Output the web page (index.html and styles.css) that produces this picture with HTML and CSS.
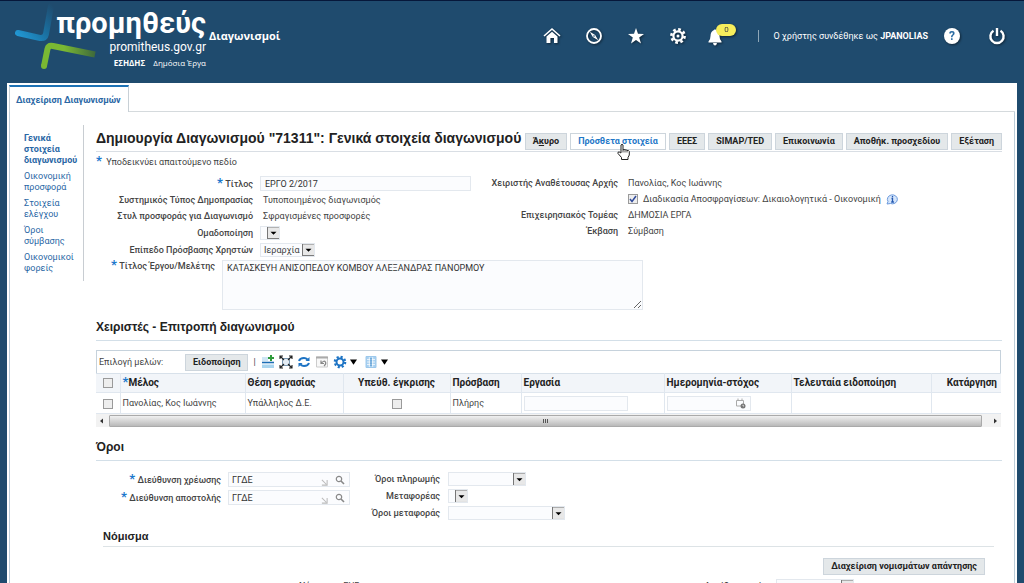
FILE: index.html
```
<!DOCTYPE html>
<html lang="el">
<head>
    <meta charset="UTF-8">
    <meta name="viewport" content="width=device-width, initial-scale=1.0">
    <title>Διαγωνισμοί</title>
    <link rel="stylesheet" href="styles.css">
</head>
<body>
    <header class="topbar">
        <div class="logo">
            <svg class="logo-mark" width="84" height="70" viewBox="0 0 84 70" aria-hidden="true">
                <defs>
                    <linearGradient id="blueArm" gradientUnits="userSpaceOnUse" x1="18" y1="34" x2="52" y2="4">
                        <stop offset="0" stop-color="#2196d2"/>
                        <stop offset="0.5" stop-color="#1a6f9f"/>
                        <stop offset="1" stop-color="#1f4b6e"/>
                    </linearGradient>
                    <linearGradient id="greenArm" x1="0" y1="0" x2="1" y2="0">
                        <stop offset="0.4" stop-color="#7ab833"/>
                        <stop offset="1" stop-color="#3f6a3c"/>
                    </linearGradient>
                </defs>
                <path d="M18 32 L40 37 Q45 37.500 46 33 L51 5" fill="none" stroke="url(#blueArm)" stroke-width="6" stroke-linecap="round"/>
                <path d="M44 65 L47.500 48 Q48.500 44 53 45 L95 53.500" fill="none" stroke="url(#greenArm)" stroke-width="6"/>
                <circle cx="44" cy="65" r="3" fill="#7ab833"/>
            </svg>
            <div class="logo-text">
                <span class="logo-name">προμηθεύς</span>
                <span class="logo-url">promitheus.gov.gr</span>
                <span class="logo-sub"><b>ΕΣΗΔΗΣ</b> Δημόσια Έργα</span>
            </div>
        </div>
        <span class="app-name">Διαγωνισμοί</span>
        <nav class="tools">
            <button class="tool" aria-label="Αρχική">
                <svg width="18" height="18" viewBox="0 0 18 18"><path d="M1 9 L9 2 L17 9" fill="none" stroke="#fff" stroke-width="1.6"/><path d="M3.5 9.6 L9 4.8 L14.5 9.6 V16 H11 V11 H7.4 V16 H3.5 Z" fill="#fff"/></svg>
            </button>
            <button class="tool" aria-label="Πλοήγηση">
                <svg width="18" height="18" viewBox="0 0 18 18"><circle cx="9" cy="9" r="7" fill="none" stroke="#fff" stroke-width="1.8"/><path d="M4.8 4.8 L10.2 8 L13.2 13.2 L7.8 10 Z" fill="#fff"/><circle cx="9" cy="9" r="0.8" fill="#1f4b6e"/></svg>
            </button>
            <button class="tool" aria-label="Αγαπημένα">
                <svg width="18" height="18" viewBox="0 0 18 18"><path d="M9 1 L11 6.8 L17 6.9 L12.2 10.6 L14 16.4 L9 13 L4 16.4 L5.8 10.6 L1 6.9 L7 6.8 Z" fill="#fff"/></svg>
            </button>
            <button class="tool" aria-label="Ρυθμίσεις">
                <svg width="18" height="18" viewBox="0 0 18 18"><circle cx="9" cy="9" r="6.6" fill="none" stroke="#fff" stroke-width="2.6" stroke-dasharray="2.7 2.48"/><circle cx="9" cy="9" r="4.6" fill="none" stroke="#fff" stroke-width="2.2"/><circle cx="9" cy="9" r="1.5" fill="#fff"/></svg>
            </button>
            <button class="tool bell" aria-label="Ειδοποιήσεις">
                <svg width="18" height="20" viewBox="0 0 18 20"><path d="M8 4 Q9 2.6 10 4 Q13.5 5.5 13.5 10 Q13.5 13.5 15.5 15.5 V16.5 H2.5 V15.5 Q4.5 13.5 4.5 10 Q4.5 5.5 8 4 Z" fill="#fff"/><path d="M7 17 H11 Q10.5 19.5 9 19.5 Q7.5 19.5 7 17 Z" fill="#fff"/></svg>
                <span class="badge">0</span>
            </button>
        </nav>
        <span class="divider"></span>
        <span class="user">Ο χρήστης συνδέθηκε ως <b>JPANOLIAS</b></span>
        <button class="tool help" aria-label="Βοήθεια">?</button>
        <button class="tool power" aria-label="Έξοδος">
            <svg width="18" height="18" viewBox="0 0 18 18"><path d="M5.5 3.8 A6.6 6.6 0 1 0 12.5 3.8" fill="none" stroke="#fff" stroke-width="2.4"/><path d="M9 1 V9" stroke="#fff" stroke-width="2.4"/></svg>
        </button>
    </header>

    <main class="panel">
        <div class="tabs"><a class="tab" href="#">Διαχείριση Διαγωνισμών</a></div>
        <div class="content">
            <nav class="sidebar">
                <a class="current" href="#">Γενικά στοιχεία διαγωνισμού</a>
                <a href="#">Οικονομική προσφορά</a>
                <a href="#">Στοιχεία ελέγχου</a>
                <a href="#">Όροι σύμβασης</a>
                <a href="#">Οικονομικοί φορείς</a>
            </nav>

            <div class="page">
                <div class="page-head">
                    <h1>Δημιουργία Διαγωνισμού "71311": Γενικά στοιχεία διαγωνισμού</h1>
                    <div class="actions">
                        <button class="btn">Ά<u>κ</u>υρο</button>
                        <button class="btn hover">Πρόσθετα στοιχεία
                            <svg class="hand" width="14" height="18" viewBox="0 0 14 18" aria-hidden="true"><path d="M4 10 V2 Q5 0.5 6 2 V7 Q7 5.8 8 7 Q9 6.3 10 7.5 Q11.5 6.8 12.3 8.5 V12 L11 14.5 V16.5 H4.5 V14.5 L1 10.5 Q0.5 8.5 2.2 9 Z" fill="#fff" stroke="#222" stroke-width="1"/><path d="M6 7 V9.5 M8 7.5 V9.5 M10 8 V9.5" stroke="#222" stroke-width="0.8"/></svg>
                        </button>
                        <button class="btn">ΕΕΕΣ</button>
                        <button class="btn">SIMAP/TED</button>
                        <button class="btn">Επικοινωνία</button>
                        <button class="btn">Αποθήκ. προσχεδίου</button>
                        <button class="btn">Εξέταση</button>
                    </div>
                </div>
                <p class="hint"><span class="req">*</span> Υποδεικνύει απαιτούμενο πεδίο</p>

                <div class="general">
                    <div class="fields fields-left">
                        <label for="title"><span class="req">*</span> Τίτλος</label>
                        <input class="field title-field" id="title" type="text" value="ΕΡΓΟ 2/2017">
                        <span class="label">Συστημικός Τύπος Δημοπρασίας</span>
                        <span class="value">Τυποποιημένος διαγωνισμός</span>
                        <span class="label">Στυλ προσφοράς για Διαγωνισμό</span>
                        <span class="value">Σφραγισμένες προσφορές</span>
                        <label for="grouping">Ομαδοποίηση</label>
                        <select class="select select-empty" id="grouping"><option></option></select>
                        <label for="access">Επίπεδο Πρόσβασης Χρηστών</label>
                        <select class="select select-access" id="access"><option>Ιεραρχία</option></select>
                    </div>
                    <div class="fields fields-right">
                        <span class="label">Χειριστής Αναθέτουσας Αρχής</span>
                        <span class="value">Πανολίας, Κος Ιωάννης</span>
                        <span class="check-row">
                            <input class="check" id="unseal" type="checkbox" checked>
                            <label for="unseal">Διαδικασία Αποσφραγίσεων: Δικαιολογητικά - Οικονομική</label>
                            <svg width="12" height="11" viewBox="0 0 12 11" aria-hidden="true"><path d="M1 10 L2 7.5 A5 4.5 0 1 1 4.5 9.5 Z" fill="#d5e5fa" stroke="#6c9add" stroke-width="1"/><path d="M6.5 2 V3.3 M5.5 4.5 H6.5 V8 M5.2 8 H7.9" stroke="#2257b0" stroke-width="1.3" fill="none"/></svg>
                        </span>
                        <span class="label">Επιχειρησιακός Τομέας</span>
                        <span class="value">ΔΗΜΟΣΙΑ ΕΡΓΑ</span>
                        <span class="label">Έκβαση</span>
                        <span class="value">Σύμβαση</span>
                    </div>
                </div>
                <div class="work-title">
                    <label for="work"><span class="req">*</span> Τίτλος Έργου/Μελέτης</label>
                    <textarea class="field" id="work">ΚΑΤΑΣΚΕΥΗ ΑΝΙΣΟΠΕΔΟΥ ΚΟΜΒΟΥ ΑΛΕΞΑΝΔΡΑΣ ΠΑΝΟΡΜΟΥ</textarea>
                </div>

                <h2>Χειριστές - Επιτροπή διαγωνισμού</h2>
                <div class="grid-box">
                    <div class="grid-tools">
                        <span class="grid-caption">Επιλογή μελών:</span>
                        <button class="btn">Ειδοποίηση</button>
                        <span class="sep">|</span>
                        <button class="icon" aria-label="Προσθήκη"><svg width="14" height="14" viewBox="0 0 14 14"><path d="M1 2 H7 V6 H1 Z" fill="#cfe6f5"/><path d="M1 7.5 H13" stroke="#1c6db5" stroke-width="1.6"/><path d="M1 9.5 H13 V13 H1 Z" fill="#a9d4ee"/><path d="M10 0 V6 M7 3 H13" stroke="#2e9b3b" stroke-width="2"/></svg></button>
                        <button class="icon" aria-label="Μεγιστοποίηση"><svg width="14" height="14" viewBox="0 0 14 14"><rect x="3.5" y="3.5" width="7" height="7" fill="#e4edf5" stroke="#7a97b0"/><path d="M1 4 V1 H4 M10 1 H13 V4 M13 10 V13 H10 M4 13 H1 V10 M1 1 L5 5 M13 1 L9 5 M13 13 L9 9 M1 13 L5 9" fill="none" stroke="#222" stroke-width="1.1"/></svg></button>
                        <button class="icon" aria-label="Ανανέωση"><svg width="14" height="14" viewBox="0 0 14 14"><path d="M2 6 Q3 3 7 3 Q9 3 10.5 4.5 M12 8 Q11 11 7 11 Q5 11 3.5 9.5" fill="none" stroke="#1c73c4" stroke-width="2"/><path d="M12.5 2 V6 H8.5 Z M1.5 12 V8 H5.5 Z" fill="#1c73c4"/></svg></button>
                        <button class="icon" aria-label="Αναίρεση"><svg width="14" height="14" viewBox="0 0 14 14"><path d="M1.5 2 H12.5 V12 H1.5 Z" fill="#f8f8f8" stroke="#ccc"/><path d="M1 2.5 H13" stroke="#aaa" stroke-width="2"/><path d="M6.5 8 Q9 5 10.5 7 Q11.5 9 9 11 M6 5.5 V8.5 H9" fill="none" stroke="#888" stroke-width="1.2"/></svg></button>
                        <button class="icon menu" aria-label="Ρυθμίσεις πίνακα"><svg width="14" height="14" viewBox="0 0 14 14"><circle cx="7" cy="7" r="5.2" fill="none" stroke="#1c73c4" stroke-width="2.2" stroke-dasharray="2.1 1.98"/><circle cx="7" cy="7" r="3.5" fill="none" stroke="#1c73c4" stroke-width="2"/></svg><svg class="caret" width="7" height="6" viewBox="0 0 8 6"><path d="M0 0 H8 L4 6 Z"/></svg></button>
                        <button class="icon menu" aria-label="Στήλες"><svg width="14" height="14" viewBox="0 0 14 14"><path d="M2 1.5 H12 V12.5 H2 Z" fill="#a8d0f0" stroke="#9cc8ec"/><path d="M5.3 2 V12 M8.7 2 V12 M3 4.5 H11 M3 7 H11 M3 9.5 H11" stroke="#fff" stroke-width="0.7"/><path d="M7 3 V11" stroke="#3b87c8"/></svg><svg class="caret" width="7" height="6" viewBox="0 0 8 6"><path d="M0 0 H8 L4 6 Z"/></svg></button>
                    </div>
                    <table>
                        <colgroup>
                            <col class="c-check"><col class="c-member"><col class="c-job"><col class="c-approve"><col class="c-access"><col class="c-task"><col class="c-date"><col class="c-last"><col class="c-remove">
                        </colgroup>
                        <thead>
                            <tr>
                                <th><input class="check" type="checkbox" aria-label="Επιλογή όλων"></th>
                                <th><span class="req">*</span>Μέλος</th>
                                <th>Θέση εργασίας</th>
                                <th class="center">Υπεύθ. έγκρισης</th>
                                <th>Πρόσβαση</th>
                                <th>Εργασία</th>
                                <th>Ημερομηνία-στόχος</th>
                                <th>Τελευταία ειδοποίηση</th>
                                <th class="last">Κατάργηση</th>
                            </tr>
                        </thead>
                        <tbody>
                            <tr>
                                <td><input class="check" type="checkbox" aria-label="Επιλογή μέλους"></td>
                                <td>Πανολίας, Κος Ιωάννης</td>
                                <td>Υπάλληλος Δ.Ε.</td>
                                <td class="center"><input class="check" type="checkbox" aria-label="Υπεύθυνος έγκρισης"></td>
                                <td>Πλήρης</td>
                                <td><input class="field task-field" type="text" aria-label="Εργασία"></td>
                                <td>
                                    <span class="field combo date-field">
                                        <input type="text" aria-label="Ημερομηνία-στόχος">
                                        <svg width="11" height="11" viewBox="0 0 11 11"><path d="M1.5 2.5 H8.5 V8 H1.5 Z M3 0.5 V3 M7 0.5 V3" fill="none" stroke="#aaa"/><circle cx="8" cy="8" r="2.5" fill="#777"/><path d="M8 6.8 V8 H9" fill="none" stroke="#fff" stroke-width="0.7"/></svg>
                                    </span>
                                </td>
                                <td></td>
                                <td></td>
                            </tr>
                        </tbody>
                    </table>
                    <div class="scrollbar">
                        <svg width="13" height="12" viewBox="0 0 13 12"><path d="M7 3.5 V8.5 L4 6 Z" fill="#333"/></svg>
                        <div class="thumb"><i></i><i></i><i></i></div>
                        <svg width="19" height="12" viewBox="0 0 19 12"><path d="M12 3.5 V8.5 L15 6 Z" fill="#333"/></svg>
                    </div>
                </div>

                <h2>Όροι</h2>
                <div class="terms">
                    <div class="fields terms-left">
                        <label for="bill"><span class="req">*</span> Διεύθυνση χρέωσης</label>
                        <span class="field combo">
                            <input id="bill" type="text" value="ΓΓΔΕ">
                            <svg class="corner" width="7" height="7" viewBox="0 0 8 8"><path d="M1 1 L6 6 M7 1 V7 H1" fill="none" stroke="#bbb" stroke-width="1.2"/></svg>
                            <svg width="10" height="10" viewBox="0 0 10 10"><circle cx="4" cy="4" r="2.7" fill="none" stroke="#888" stroke-width="1.2"/><path d="M6 6 L9 9" stroke="#888" stroke-width="1.6"/></svg>
                        </span>
                        <label for="ship"><span class="req">*</span> Διεύθυνση αποστολής</label>
                        <span class="field combo">
                            <input id="ship" type="text" value="ΓΓΔΕ">
                            <svg class="corner" width="7" height="7" viewBox="0 0 8 8"><path d="M1 1 L6 6 M7 1 V7 H1" fill="none" stroke="#bbb" stroke-width="1.2"/></svg>
                            <svg width="10" height="10" viewBox="0 0 10 10"><circle cx="4" cy="4" r="2.7" fill="none" stroke="#888" stroke-width="1.2"/><path d="M6 6 L9 9" stroke="#888" stroke-width="1.6"/></svg>
                        </span>
                    </div>
                    <div class="fields terms-right">
                        <label for="payment">Όροι πληρωμής</label>
                        <select class="select select-payment" id="payment"><option></option></select>
                        <label for="carrier">Μεταφορέας</label>
                        <select class="select select-empty" id="carrier"><option></option></select>
                        <label for="freight">Όροι μεταφοράς</label>
                        <select class="select select-freight" id="freight"><option></option></select>
                    </div>
                </div>

                <section class="currency">
                    <h3>Νόμισμα</h3>
                    <div class="currency-actions"><button class="btn">Διαχείριση νομισμάτων απάντησης</button></div>
                    <div class="currency-row">
                        <span class="label">Νόμισμα</span>
                        <span class="value">EUR</span>
                        <label for="precision">Ακρίβεια τιμής</label>
                        <select class="select select-payment" id="precision"><option></option></select>
                    </div>
                </section>
            </div>
        </div>
    </main>
</body>
</html>
```
FILE: styles.css
```
* {
    box-sizing: border-box;
}

body {
    margin: 0;
    height: 100vh;
    overflow: hidden;
    display: flex;
    flex-direction: column;
    background-color: #1f4b6e;
    color: #444;
    font-family: Roboto, "Liberation Sans", sans-serif;
    font-size: 9px;
    line-height: 12px;
}

button, input, select, textarea {
    font: inherit;
    color: inherit;
    margin: 0;
}

a {
    color: #2a67a5;
    text-decoration: none;
}

/* Header */
.topbar {
    flex: none;
    display: flex;
    align-items: center;
    height: 83px;
    padding: 0 18px 12px 0;
    border-top: 1px solid #06173a;
    color: #fff;
}

.logo {
    display: flex;
    align-self: flex-start;
    width: 209px;
}

.logo-mark {
    flex: none;
    overflow: visible;
    margin-right: -29px;
}

.logo-text {
    display: flex;
    flex: 1;
    flex-direction: column;
    align-items: flex-end;
    padding: 5px 3px 0 0;
    white-space: nowrap;
}

.logo-name {
    font: bold 29px/34px Roboto, sans-serif;
}

.logo-url {
    font: 12px/14px Roboto, sans-serif;
}

.logo-sub {
    font: 8px/18px "Open Sans", sans-serif;
}

.logo-sub b {
    margin-right: 6px;
}

.app-name {
    font: bold 11px/16px "Open Sans", sans-serif;
}

.tools {
    display: flex;
    gap: 24px;
    margin-left: auto;
}

.tool {
    position: relative;
    display: flex;
    align-items: center;
    justify-content: center;
    width: 18px;
    height: 20px;
    padding: 0;
    border: 0;
    background: none;
    color: #fff;
    filter: drop-shadow(1px 1px 1px rgba(0, 0, 0, 0.5));
}

.bell {
    margin-left: -5px;
}

.badge {
    position: absolute;
    left: 10px;
    top: -2px;
    width: 20px;
    height: 12px;
    border-radius: 6px;
    background-color: #f6ee5c;
    color: #444;
    font-size: 8px;
    line-height: 12px;
}

.divider {
    width: 1px;
    height: 12px;
    margin: 0 14px 0 34px;
    background-color: #8fa7b8;
}

.help {
    width: 16px;
    height: 16px;
    margin: 0 28px 0 16px;
    border-radius: 50%;
    background-color: #fff;
    color: #2a6ca3;
    font-size: 12px;
    font-weight: bold;
}

/* Panel */
.panel {
    flex: 1;
    margin: 0 7px;
    padding: 2px 2px 0;
    background-color: #fff;
}

.tabs {
    display: flex;
    border-bottom: 1px solid #d5dadd;
}

.tab {
    margin-bottom: -1px;
    padding: 7px 7px 6px 6px;
    border: 1px solid #c8d0d6;
    border-top: 2px solid #1d72b5;
    border-bottom: 0;
    background-color: #fff;
    font-weight: bold;
}

.content {
    display: flex;
    align-items: flex-start;
    padding: 13px 12px 0 14px;
    border: 1px solid #bccdd9;
    border-top: 0;
}

.sidebar {
    display: flex;
    flex: none;
    flex-direction: column;
    gap: 5px;
    width: 60px;
    margin-right: 12px;
    padding: 8px 4px 7px 0;
    border-right: 1px solid #c8cdd2;
    line-height: 11px;
}

.current {
    font-weight: bold;
}

.page {
    flex: 1;
    min-width: 0;
}

.page-head {
    display: flex;
    align-items: center;
    justify-content: space-between;
    height: 27px;
    border-bottom: 1px solid #d9dee4;
    white-space: nowrap;
}

h1, h2, h3 {
    margin: 0;
    color: #222;
    font-family: "Liberation Sans", Arial, sans-serif;
    font-weight: bold;
}

h1 {
    font-size: 14px;
    line-height: 26px;
}

h2 {
    padding-bottom: 5px;
    border-bottom: 1px solid #d3dfe8;
    font-size: 12px;
    line-height: 16px;
}

.actions {
    display: flex;
    gap: 3px;
    padding-top: 6px;
}

.btn {
    position: relative;
    height: 17px;
    padding: 0 7px;
    border: 1px solid #cdd5dc;
    background-color: #e4e8ea;
    color: #222;
    font-weight: bold;
    line-height: 15px;
    white-space: nowrap;
}

.btn.hover {
    background-color: #fff;
    color: #1f78c8;
}

.hand {
    position: absolute;
    left: 46px;
    top: 9px;
    z-index: 1;
}

.hint {
    margin: 0;
    padding: 4px 0 0;
}

.hint .req {
    margin-right: 2px;
}

.req {
    color: #1c78cc;
    font-size: 13px;
    font-weight: bold;
    line-height: 8px;
}

/* Form rows */
.general, .terms {
    display: flex;
    align-items: flex-start;
}

.general {
    padding-top: 7px;
}

.fields {
    display: grid;
    align-items: center;
    column-gap: 7px;
    white-space: nowrap;
}

.fields > label, .label, .work-title > label, .currency-row > label {
    color: #444;
    font-weight: 500;
    text-align: right;
}

.fields-left {
    flex: 0 0 375px;
    grid-template-columns: 157px 1fr;
    grid-template-rows: 17px 16px 16px 17px 17px;
}

.fields-right {
    grid-template-columns: 147px auto;
    grid-auto-rows: 16px;
    column-gap: 10px;
}

.fields-left .value {
    padding-left: 3px;
}

.check-row {
    grid-column: 2;
    display: flex;
    align-items: center;
    gap: 5px;
}

.check {
    appearance: none;
    width: 10px;
    height: 10px;
    border: 1px solid #9a9a9a;
    background: #eee;
    vertical-align: middle;
}

.check:checked {
    background: #eee url("data:image/svg+xml,%3Csvg xmlns='http://www.w3.org/2000/svg' viewBox='0 0 8 8'%3E%3Cpath d='M1 4 L3 6.5 L7 1' fill='none' stroke='%23304a9a' stroke-width='1.5'/%3E%3C/svg%3E") center / 8px 8px no-repeat;
}

.field {
    height: 15px;
    padding: 0 4px;
    border: 1px solid #e3e8ee;
    background-color: #fbfcfe;
    color: #333;
}

.title-field {
    width: 211px;
}

.select {
    appearance: none;
    height: 14px;
    padding: 0 13px 0 3px;
    border: 1px solid #e3e8ee;
    border-radius: 0;
    background: #fbfcfe url("data:image/svg+xml,%3Csvg xmlns='http://www.w3.org/2000/svg' viewBox='0 0 13 13'%3E%3Crect x='.5' y='.5' width='12' height='12' fill='%23e8e8e8' stroke='%23777'/%3E%3Cpath d='M3.5 5.5 H9.5 L6.5 8.5 Z'/%3E%3C/svg%3E") right center / 13px 13px no-repeat;
    background-origin: border-box;
    line-height: 12px;
}

.select-empty {
    width: 20px;
}

.select-access {
    width: 55px;
}

.select-payment {
    width: 78px;
}

.select-freight {
    width: 117px;
}

.work-title {
    display: flex;
    gap: 7px;
    padding: 2px 0 9px;
}

.work-title > label {
    width: 119px;
    white-space: nowrap;
}

.work-title textarea {
    width: 421px;
    height: 50px;
    padding: 1px 4px;
    resize: vertical;
}

/* Members table */
.grid-box {
    margin: 9px 1px 12px 0;
}

.grid-tools {
    display: flex;
    align-items: center;
    gap: 4px;
    height: 23px;
    padding-left: 2px;
    border: 1px solid #c6d2dc;
    border-bottom: 0;
}

.grid-caption {
    width: 82px;
}

.sep {
    margin: 0 1px;
}

.icon {
    display: flex;
    align-items: center;
    padding: 0;
    border: 0;
    background: none;
}

.menu {
    gap: 3px;
    margin-right: 3px;
}

table {
    width: 100%;
    table-layout: fixed;
    border-collapse: collapse;
    white-space: nowrap;
}

.c-check { width: 24px; }
.c-member { width: 125px; }
.c-job { width: 98px; }
.c-approve { width: 107px; }
.c-access { width: 71px; }
.c-task { width: 143px; }
.c-date { width: 127px; }
.c-last { width: 140px; }

th, td {
    padding: 0 2px;
    border-right: 1px solid #e0e7ef;
    border-bottom: 1px solid #e0e7ef;
    text-align: left;
}

th:last-child, td:last-child {
    border-right: 0;
}

th {
    height: 19px;
    border-top: 1px solid #d8e1ea;
    background-color: #f2f5f9;
    color: #222;
    font-size: 10px;
}

td {
    height: 21px;
}

th:first-child, td:first-child, .center {
    text-align: center;
}

th.last {
    padding-right: 4px;
    text-align: right;
}

.task-field {
    display: block;
    width: 104px;
}

.combo {
    display: flex;
    align-items: center;
    gap: 7px;
    width: 122px;
    padding: 0 4px 0 3px;
}

.combo input {
    flex: 1;
    min-width: 0;
    padding: 0;
    border: 0;
    background: none;
}

.corner {
    align-self: flex-end;
}

.date-field {
    width: 84px;
}

.scrollbar {
    display: flex;
    align-items: center;
    height: 13px;
    background-color: #f2f2f2;
}

.thumb {
    display: flex;
    flex: 1;
    align-items: center;
    justify-content: center;
    gap: 1px;
    height: 12px;
    border: 1px solid #aaa;
    border-radius: 1px;
    background: linear-gradient(#f0f0f0, #b9b9b9);
}

.thumb i {
    width: 1px;
    height: 4px;
    background-color: #555;
}

/* Terms */
.terms {
    padding-top: 10px;
    gap: 16px;
}

.terms-left {
    grid-template-columns: 125px 122px;
    grid-auto-rows: 17px;
    row-gap: 1px;
}

.terms-right {
    grid-template-columns: 74px auto;
    grid-auto-rows: 16px;
    column-gap: 8px;
    row-gap: 1px;
}

.currency {
    padding: 7px 8px 0 7px;
}

h3 {
    padding-bottom: 2px;
    border-bottom: 1px solid #dde3e6;
    font-size: 11px;
    line-height: 16px;
}

.currency-actions {
    display: flex;
    justify-content: flex-end;
    padding: 11px 9px 4px 0;
}

.currency-row {
    display: flex;
    align-items: center;
    gap: 9px;
    padding: 0 140px 0 196px;
}

.currency-row label {
    margin-left: auto;
}
```
